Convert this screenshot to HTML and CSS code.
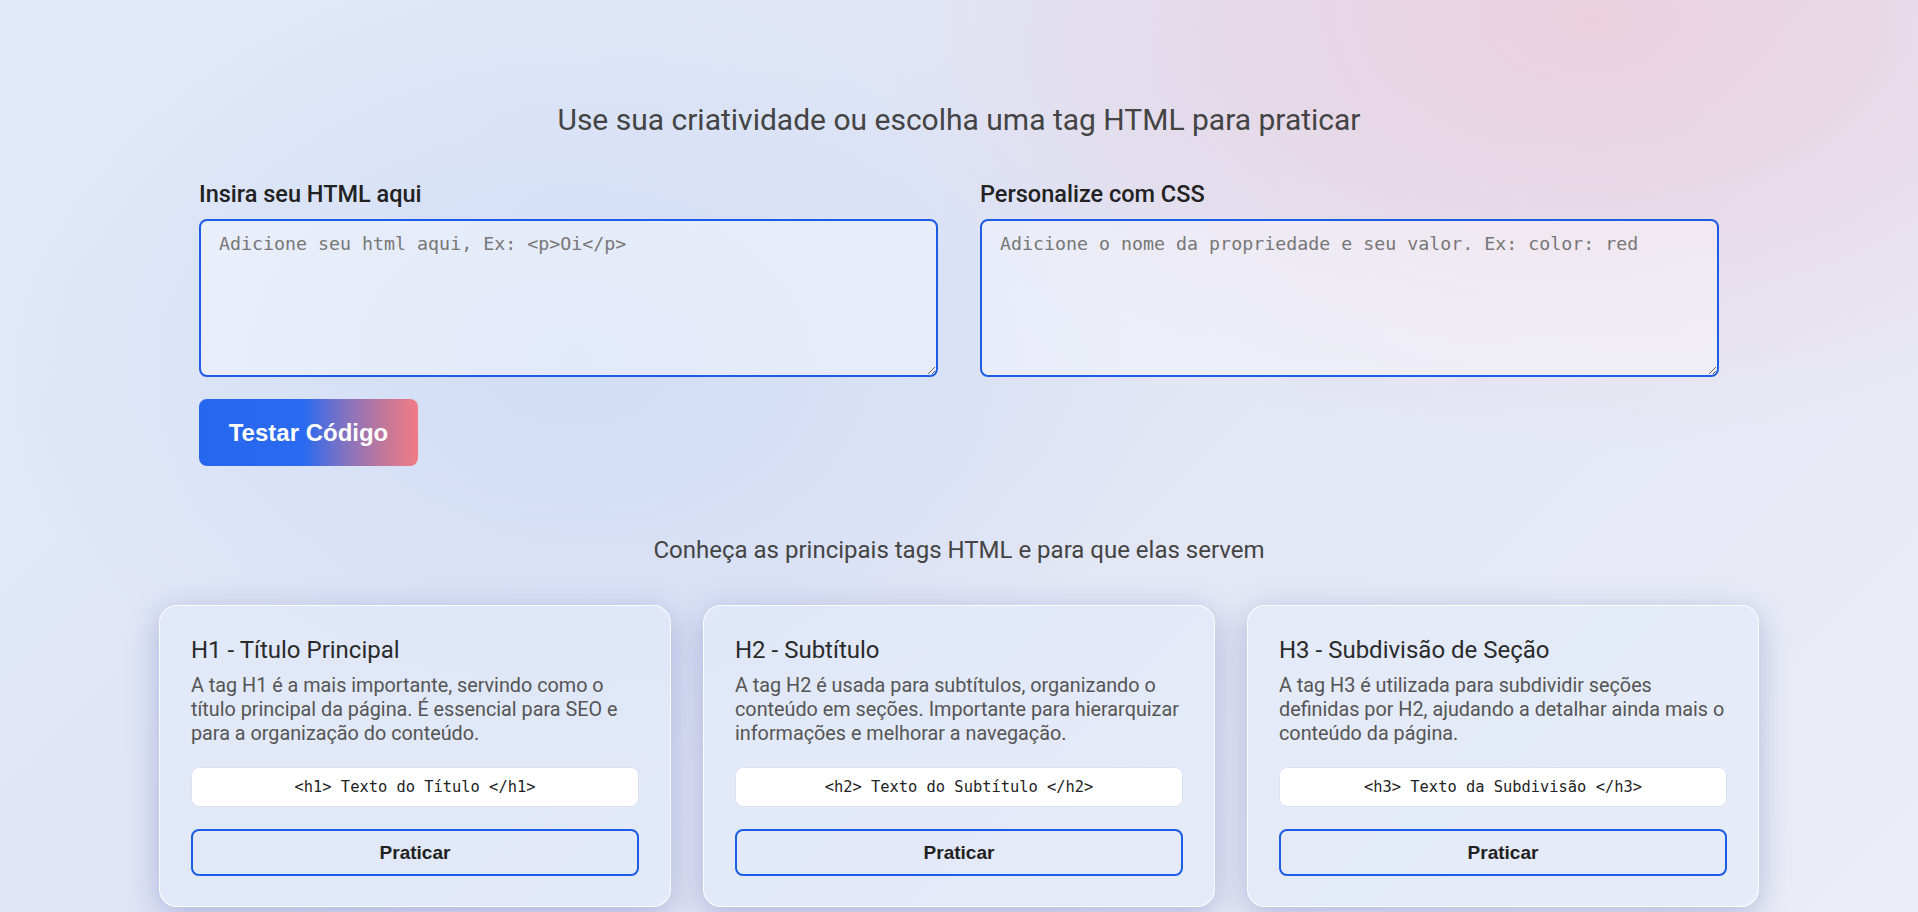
FILE: index.html
```html
<!DOCTYPE html>
<html lang="pt-BR">
<head>
<meta charset="utf-8">
<title>Pratique HTML</title>
<link rel="stylesheet" href="styles.css">
</head>
<body>
<main class="page">
  <h2 class="intro">Use sua criatividade ou escolha uma tag HTML para praticar</h2>
  <section class="editor">
    <div class="editor-grid">
      <div class="field">
        <label class="field-label">Insira seu HTML aqui</label>
        <textarea class="code-input" placeholder="Adicione seu html aqui, Ex: &lt;p&gt;Oi&lt;/p&gt;"></textarea>
      </div>
      <div class="field">
        <label class="field-label">Personalize com CSS</label>
        <textarea class="code-input" placeholder="Adicione o nome da propriedade e seu valor. Ex: color: red"></textarea>
      </div>
    </div>
    <button class="test-btn">Testar Código</button>
  </section>
  <h3 class="section-title">Conheça as principais tags HTML e para que elas servem</h3>
  <section class="cards">
    <article class="card">
      <h4 class="card-title">H1 - Título Principal</h4>
      <p class="card-text">A tag H1 é a mais importante, servindo como o título principal da página. É essencial para SEO e para a organização do conteúdo.</p>
      <div class="code-box">&lt;h1&gt; Texto do Título &lt;/h1&gt;</div>
      <button class="practice-btn">Praticar</button>
    </article>
    <article class="card">
      <h4 class="card-title">H2 - Subtítulo</h4>
      <p class="card-text">A tag H2 é usada para subtítulos, organizando o conteúdo em seções. Importante para hierarquizar informações e melhorar a navegação.</p>
      <div class="code-box">&lt;h2&gt; Texto do Subtítulo &lt;/h2&gt;</div>
      <button class="practice-btn">Praticar</button>
    </article>
    <article class="card">
      <h4 class="card-title">H3 - Subdivisão de Seção</h4>
      <p class="card-text">A tag H3 é utilizada para subdividir seções definidas por H2, ajudando a detalhar ainda mais o conteúdo da página.</p>
      <div class="code-box">&lt;h3&gt; Texto da Subdivisão &lt;/h3&gt;</div>
      <button class="practice-btn">Praticar</button>
    </article>
  </section>
</main>
</body>
</html>
```
FILE: styles.css
```css
* { box-sizing: border-box; }
html, body { margin: 0; padding: 0; }
body {
  min-height: 912px;
  font-family: Roboto, "Liberation Sans", Arial, sans-serif;
  color: #333;
  background:
    radial-gradient(ellipse 1000px 600px at 83% 2%, rgba(236, 206, 220, 0.95), rgba(236, 206, 220, 0) 72%),
    radial-gradient(ellipse 800px 560px at 30% 38%, rgba(208, 220, 246, 0.95), rgba(208, 220, 246, 0) 72%),
    linear-gradient(135deg, #e1eaf8 0%, #dfe4f5 45%, #eceef6 100%);
}
.page {
  padding-top: 102px;
  padding-bottom: 40px;
  display: flex;
  flex-direction: column;
  align-items: center;
}
.intro {
  margin: 0;
  font-size: 30px;
  font-weight: 400;
  color: #444;
  line-height: 36px;
}
.editor {
  width: 1520px;
  margin-top: 42px;
  display: flex;
  flex-direction: column;
  align-items: flex-start;
}
.editor-grid {
  width: 100%;
  display: grid;
  grid-template-columns: 1fr 1fr;
  gap: 42px;
}
.field { display: flex; flex-direction: column; }
.field-label {
  font-size: 23.5px;
  font-weight: 500;
  color: #222;
  line-height: 28px;
  margin-bottom: 11px;
}
.code-input {
  height: 158px;
  border: 2px solid #1d5ce6;
  border-radius: 8px;
  background: rgba(255, 255, 255, 0.38);
  padding: 12px 18px;
  font-family: "DejaVu Sans Mono", monospace;
  font-size: 18.3px;
  color: #333;
  resize: vertical;
  outline: none;
}
.code-input::placeholder { color: #777; }
.test-btn {
  margin-top: 22px;
  width: 219px;
  height: 67px;
  border: none;
  border-radius: 8px;
  background: linear-gradient(to right, #2667ef 0%, #2a6af0 48%, #8172c2 66%, #c47799 85%, #f07b86 100%);
  color: #fff;
  font-family: "Liberation Sans", Arial, sans-serif;
  font-weight: 700;
  font-size: 24px;
  cursor: pointer;
}
.section-title {
  margin: 69px 0 0;
  font-size: 24px;
  font-weight: 400;
  color: #444;
  line-height: 30px;
}
.cards {
  width: 1600px;
  margin-top: 40px;
  display: grid;
  grid-template-columns: repeat(3, 1fr);
  gap: 32px;
}
.card {
  border: 1px solid rgba(255, 255, 255, 0.85);
  border-radius: 18px;
  background: rgba(226, 235, 250, 0.6);
  box-shadow: 0 8px 32px rgba(40, 50, 150, 0.28);
  padding: 29px 31px 30px;
  display: flex;
  flex-direction: column;
}
.card-title {
  margin: 0;
  font-size: 24px;
  font-weight: 400;
  color: #2b2b2b;
  line-height: 30px;
}
.card-text {
  margin: 9px 0 0;
  font-size: 19.8px;
  line-height: 24px;
  color: #555;
}
.code-box {
  margin-top: 21px;
  height: 40px;
  background: #fff;
  border: 1px solid #dde2ea;
  border-radius: 8px;
  display: flex;
  align-items: center;
  justify-content: center;
  font-family: "DejaVu Sans Mono", monospace;
  font-size: 15.4px;
  color: #222;
}
.practice-btn {
  margin-top: 22px;
  height: 47px;
  background: transparent;
  border: 2px solid #1d5ce6;
  border-radius: 8px;
  font-family: "Liberation Sans", Arial, sans-serif;
  font-weight: 700;
  font-size: 19px;
  color: #222;
  cursor: pointer;
}
```
